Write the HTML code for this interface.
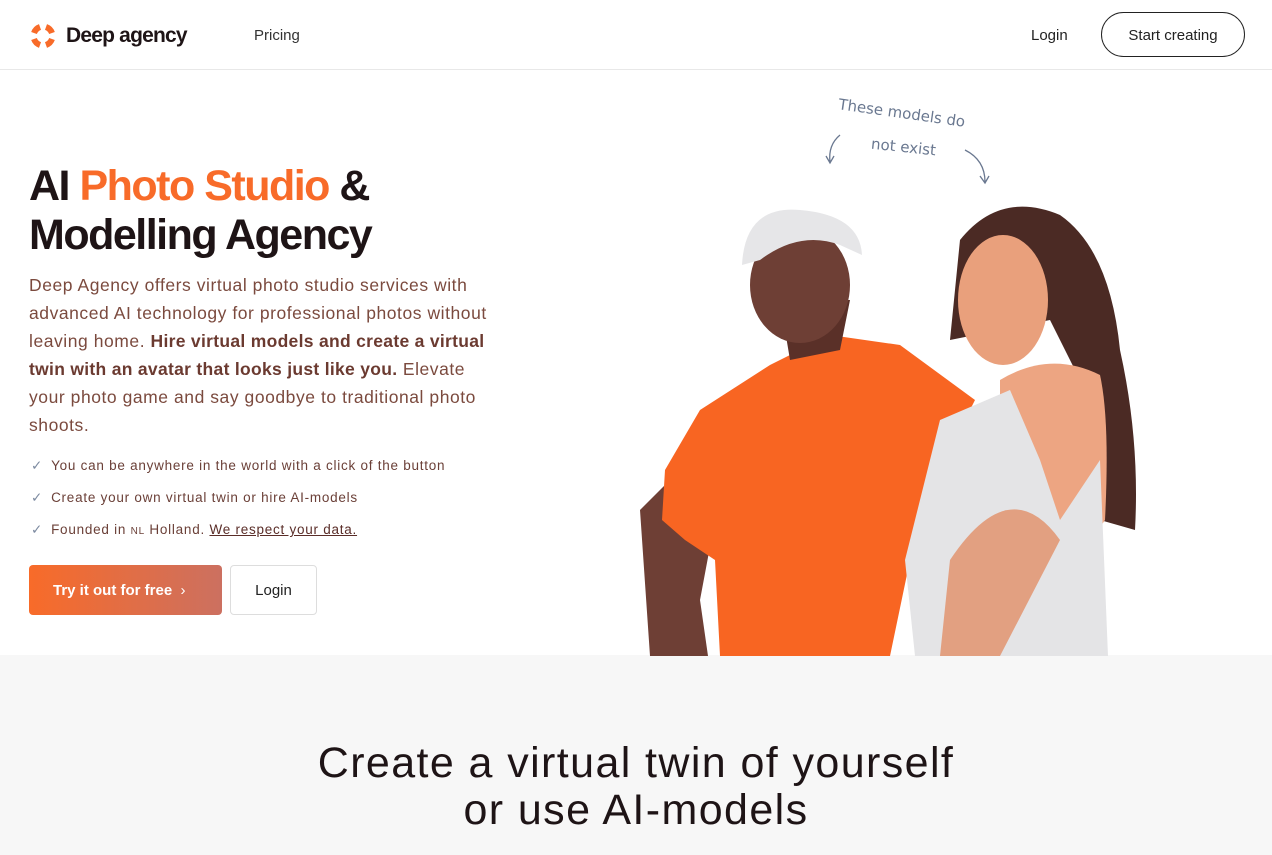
<!DOCTYPE html>
<html><head><meta charset="utf-8"><style>
*{margin:0;padding:0;box-sizing:border-box}
body{width:1272px;height:855px;overflow:hidden;background:#fff;font-family:"Liberation Sans",sans-serif;position:relative;color:#1f1416}
.nav{position:absolute;top:0;left:0;width:1272px;height:70px;border-bottom:1px solid #e8e8e8}
.logo{position:absolute;left:29px;top:22px}
.brand{position:absolute;left:66px;top:24px;font-size:21px;font-weight:bold;letter-spacing:-0.8px;color:#1e1416}
.pricing{position:absolute;left:254px;top:27px;font-size:15px;color:#333}
.login{position:absolute;left:1031px;top:27px;font-size:15px;color:#222}
.start{position:absolute;left:1101px;top:12px;width:144px;height:45px;border:1px solid #222;border-radius:23px;font-size:15px;text-align:center;line-height:45px;color:#222}
h1{position:absolute;left:29px;top:162px;font-size:43px;line-height:49px;font-weight:bold;letter-spacing:-1.5px;color:#1e1416}
h1 span{color:#f86b29}
.p{position:absolute;left:29px;top:271px;width:466px;font-size:17.5px;line-height:28px;color:#7b4a3e;letter-spacing:0.55px}
.p b{color:#6b3a30;letter-spacing:0.3px}
.li{position:absolute;left:31px;font-size:13.5px;color:#6b4038;letter-spacing:0.75px}
.li i{font-style:normal;color:#7c8aa0;margin-right:8px}
.li u{color:#5a2d28}
.btn1{position:absolute;left:29px;top:565px;width:193px;height:50px;border-radius:4px;background:linear-gradient(90deg,#f86b29,#cc7060);color:#fff;font-weight:bold;font-size:15px;line-height:52px;padding-left:24px}
.btn2{position:absolute;left:230px;top:565px;width:87px;height:50px;border:1px solid #ddd;border-radius:4px;font-size:15px;line-height:50px;text-align:center;color:#222}
.note{position:absolute;font-family:"DejaVu Sans",sans-serif;font-size:15px;color:#6a7890}
.bottom{position:absolute;left:0;top:655px;width:1272px;height:200px;background:#f7f7f7}
h2{position:absolute;top:740px;left:0;width:1272px;text-align:center;font-size:43px;line-height:47px;font-weight:normal;color:#1e1416;letter-spacing:1.4px}
</style></head><body>
<div class="nav">
<svg class="logo" width="28" height="28" viewBox="0 0 28 28"><g fill="none" stroke="#f86b29" stroke-width="6"><path d="M5 11 A10 10 0 0 1 11 5"/><path d="M17 5 A10 10 0 0 1 23 11"/><path d="M23 17 A10 10 0 0 1 17 23"/><path d="M11 23 A10 10 0 0 1 5 17"/></g></svg>
<div class="brand">Deep agency</div>
<div class="pricing">Pricing</div>
<div class="login">Login</div>
<div class="start">Start creating</div>
</div>
<h1>AI <span>Photo Studio</span> &amp;<br>Modelling Agency</h1>
<div class="p">Deep Agency offers virtual photo studio services with advanced AI technology for professional photos without leaving home. <b>Hire virtual models and create a virtual twin with an avatar that looks just like you.</b> Elevate your photo game and say goodbye to traditional photo shoots.</div>
<div class="li" style="top:458px"><i>✓</i>You can be anywhere in the world with a click of the button</div>
<div class="li" style="top:490px"><i>✓</i>Create your own virtual twin or hire AI-models</div>
<div class="li" style="top:522px"><i>✓</i>Founded in <small style="font-size:10px">NL</small> Holland. <u>We respect your data.</u></div>
<div class="btn1">Try it out for free &nbsp;<span style="font-weight:normal">›</span></div>
<div class="btn2">Login</div>
<div class="bottom"></div>
<svg style="position:absolute;left:620px;top:90px" width="520" height="566" viewBox="620 90 520 566">
<path d="M840 135 Q828 145 830 162 M826 156 L830 163 L834 156" stroke="#6a7890" fill="none" stroke-width="1.3"/>
<path d="M965 150 Q985 160 985 182 M980 176 L985 183 L989 176" stroke="#6a7890" fill="none" stroke-width="1.3"/>
<path d="M640 510 L690 460 L715 520 L700 600 L708 656 L650 656 Z" fill="#6e3f35"/>
<path d="M665 470 L700 410 L770 365 L830 335 L900 345 L975 400 L940 470 L910 560 L890 656 L720 656 L715 560 L685 540 L662 520Z" fill="#f86522"/>
<path d="M780 300 L850 300 L840 350 L790 360Z" fill="#5a3028"/>
<ellipse cx="800" cy="285" rx="50" ry="58" fill="#6e3f35"/>
<path d="M742 265 Q745 205 800 210 Q860 215 862 255 L840 245 Q800 230 760 260 Z" fill="#e6e6e8"/>
<path d="M960 240 Q1000 190 1060 215 Q1110 250 1120 350 Q1140 440 1135 530 L1100 520 L1090 400 L1050 320 L950 340 Z" fill="#4b2a24"/>
<ellipse cx="1003" cy="300" rx="45" ry="65" fill="#e9a07c"/>
<path d="M1000 380 Q1050 350 1100 375 Q1110 420 1105 520 L1050 600 L1000 520 Z" fill="#eda582"/>
<path d="M940 420 L1010 390 L1040 460 L1060 520 L1100 460 L1108 656 L915 656 L905 560 Z" fill="#e4e4e6"/>
<path d="M950 560 Q1010 470 1060 540 L1000 656 L940 656Z" fill="#e2a081"/>
</svg>
<div class="note" style="left:838px;top:104px;transform:rotate(8deg)">These models do</div>
<div class="note" style="left:871px;top:138px;transform:rotate(6deg)">not exist</div>
<h2>Create a virtual twin of yourself<br>or use AI-models</h2>
</body></html>
